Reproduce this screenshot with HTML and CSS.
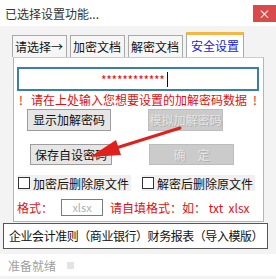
FILE: index.html
```html
<!DOCTYPE html>
<html>
<head>
<meta charset="utf-8">
<link rel="stylesheet" href="styles.css">
</head>
<body>
<div class="window">
  <div class="title">
    <span class="title-text">已选择设置功能...</span>
    <span class="close">×</span>
  </div>
  <div class="tabs">
    <div class="tab">请选择→</div>
    <div class="tab">加密文档</div>
    <div class="tab">解密文档</div>
    <div class="tab active">安全设置</div>
  </div>
  <div class="panel">
    <div class="pwd"><span class="stars">************</span><span class="caret"></span></div>
    <div class="hint"><span class="bang">!</span><span class="hint-text">请在上处输入您想要设置的加解密码数据</span><span class="bang">!</span></div>
    <div class="row row1">
      <div class="btn show">显示加解密码</div>
      <div class="btn disabled">模拟加解密码</div>
    </div>
    <div class="row row2">
      <div class="btn save">保存自设密码</div>
      <div class="btn disabled ok">确　定</div>
    </div>
    <div class="checks">
      <label class="chk"><span class="box"></span>加密后删除原文件</label>
      <label class="chk"><span class="box"></span>解密后删除原文件</label>
    </div>
    <div class="fmt">
      <span class="red">格式：</span>
      <span class="fmt-input">xlsx</span>
      <span class="red">请自填格式：如： txt&nbsp;&nbsp;xlsx</span>
    </div>
    <svg class="arrow" width="100" height="40" viewBox="0 0 100 40">
      <line x1="92" y1="2" x2="28" y2="22" stroke="#e0201c" stroke-width="3" stroke-linecap="round"/>
      <polygon points="2,31 28,14 33,29" fill="#e0201c"/>
    </svg>
  </div>
  <div class="template">企业会计准则（商业银行）财务报表（导入模版）</div>
  <div class="status"><span>准备就绪</span><span class="sq"></span></div>
</div>
</body>
</html>
```

FILE: styles.css
```css
* { box-sizing: border-box; }
html, body { margin: 0; padding: 0; }
body {
  font-family: "Noto Sans CJK SC", "Liberation Sans", sans-serif;
  font-size: 12px;
  color: #111;
  background: #efefef;
}
.window {
  width: 276px;
  height: 279px;
  background: #f3f3f3;
  display: flex;
  flex-direction: column;
  overflow: hidden;
}
.title {
  height: 26px;
  background: #fff;
  display: flex;
  align-items: center;
  justify-content: space-between;
  border-top: 1px solid #fff;
  padding-left: 5px;
}
.title-text { color: #333; line-height: 14px; }
.close {
  width: 23px;
  height: 17px;
  background: #d94a4a;
  color: #fff;
  font-size: 12px;
  line-height: 17px;
  text-align: center;
}
.tabs {
  display: flex;
  align-items: flex-end;
  height: 31px;
  padding-left: 12px;
  gap: 3px;
}
.tab {
  height: 22px;
  line-height: 21px;
  padding: 0 3px 0 2px;
  border: 1px solid #a9a9a9;
  border-bottom: none;
  background: #f6f6f6;
  color: #111;
  white-space: nowrap;
}
.tab.active {
  height: 25px;
  line-height: 22px;
  color: #1a1ad8;
  background: #fff;
  border-top: 3px solid #f5b642;
  padding: 0 4px 0 4px;
}
.panel {
  position: relative;
  margin: 0 12px 0 13px;
  height: 165px;
  border: 1px solid #b5b5b5;
  border-top: 1px solid #ccc;
  background: #fff;
  padding: 9px 4px 0 3px;
}
.pwd {
  height: 24px;
  border: 2px solid #3a7eb0;
  background: #fff;
  display: flex;
  align-items: center;
  padding-left: 82px;
}
.stars { color: #e01010; font-size: 12px; letter-spacing: -0.3px; }
.caret { width: 1px; height: 15px; background: #111; margin-left: 2px; }
.hint {
  display: flex;
  justify-content: space-between;
  color: #e01010;
  height: 18px;
  line-height: 18px;
  white-space: nowrap;
}
.hint-text { flex: none; padding-left: 2px; }
.bang { width: 8px; text-align: center; flex: none; }
.row { display: flex; white-space: nowrap; }
.row1 { padding-left: 10px; gap: 37px; }
.row2 { margin-top: 13px; padding-left: 13px; gap: 37px; }
.btn {
  height: 22px;
  line-height: 20px;
  padding: 0;
  border: 1px solid #9c9c9c;
  background: #e6e6e6;
  color: #111;
  text-align: center;
  white-space: nowrap;
}
.show { width: 84px; }
.btn.disabled {
  background: #cbcbcb;
  color: #e4e4e4;
  border-color: #bdbdbd;
  width: 75px;
  text-shadow: 1px 1px 0 #b0b0b0;
}
.save { height: 21px; width: 82px; }
.btn.ok { width: 85px; height: 21px; }
.checks {
  display: flex;
  margin-top: 10px;
  gap: 11px;
  padding-left: 1px;
  white-space: nowrap;
}
.chk {
  display: flex;
  align-items: center;
  background: #f0f0f0;
  height: 16px;
  padding-right: 2px;
}
.box {
  width: 12px;
  height: 12px;
  border: 1px solid #333;
  background: #fff;
  margin-right: 3px;
}
.fmt {
  display: flex;
  align-items: center;
  margin-top: 8px;
  height: 17px;
  white-space: nowrap;
}
.red { color: #e01010; }
.fmt-input {
  width: 42px;
  height: 17px;
  border: 1px solid #7a7a7a;
  color: #b0b0b0;
  text-align: center;
  line-height: 15px;
  font-size: 11px;
  margin: 0 7px 0 8px;
  background: #fff;
}
.arrow {
  position: absolute;
  left: 74px;
  top: 68px;
}
.template {
  margin: 1px 8px 0 3px;
  height: 26px;
  border: 1px solid #555;
  background: #fff;
  line-height: 24px;
  padding-left: 5px;
  white-space: nowrap;
  overflow: hidden;
  letter-spacing: -0.45px;
}
.status {
  height: 22px;
  display: flex;
  align-items: center;
  padding-left: 8px;
  color: #a0a0a0;
  background: #fff;
  margin-top: 5px;
}
.sq { width: 7px; height: 7px; background: #e3e3e3; margin-left: 11px; }
```
